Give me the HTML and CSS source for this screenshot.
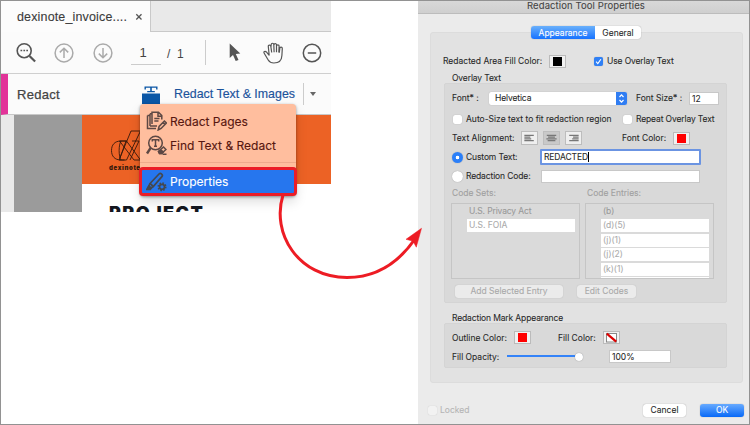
FILE: index.html
```html
<!DOCTYPE html>
<html lang="en">
<head>
<meta charset="utf-8">
<title>Redaction Tool Properties</title>
<link rel="stylesheet" href="styles.css">
</head>
<body>
<main class="frame">
  <section class="app">
    <div class="tabs"><div class="tab"><span class="tab-name">dexinote_invoice....</span><svg class="close" viewBox="0 0 8 8"><path d="M1.3 1.3l5.2 5.2M6.5 1.3L1.3 6.5"/></svg></div></div>
    <div class="toolbar">
      <svg class="tool search" viewBox="0 0 22 22"><circle cx="9.2" cy="8.700" r="7"/><path d="M14.500 14l5.600 5.500" stroke-width="2.2"/><path d="M5.500 8.500h1.700M8.400 8.500h1.700M11.300 8.500h1.700" stroke-width="1.6"/></svg>
      <svg class="tool up" viewBox="0 0 20 20"><circle cx="10" cy="10" r="8.9"/><path d="M10 15V5.5M5.8 9.4L10 5.2l4.2 4.2"/></svg>
      <svg class="tool down" viewBox="0 0 20 20"><circle cx="10" cy="10" r="8.9"/><path d="M10 5v9.5M5.8 10.6l4.2 4.2 4.2-4.2"/></svg>
      <span class="page-number">1</span>
      <span class="page-total">/&nbsp; 1</span>
      <i class="rule"></i>
      <svg class="tool cursor" viewBox="0 0 12 19"><path d="M.7.5v14.4l3.3-3 2.7 6.2 2.8-1.2-2.7-6 4.5-.3z"/></svg>
      <svg class="tool hand" viewBox="0 0 21 22"><path d="M6.2 13.5L3.4 10C2 8.5.3 9.8 1.2 11.3l4 6.7c1.2 2 3 3 5.7 3 5.2 0 7.8-3 8-7.500l.4-7c0-1.700-2.300-1.900-2.500-.2l-.5 4.500M6.200 13.500L5.300 4.500c-.2-1.800 2.200-2 2.500-.3l.9 6.300M7.900 5.500L8.200 2.500c.1-1.700 2.500-1.700 2.600 0l.3 7.700M10.900 3c0-1.900 2.600-1.900 2.600-.1v7.400M13.500 4c.1-1.700 2.700-1.600 2.600.2l-.3 6.400"/></svg>
      <svg class="tool minus" viewBox="0 0 20 20"><circle cx="10" cy="10" r="8.700"/><path d="M5.800 10h8.400"/></svg>
    </div>
    <div class="redact-bar">
      <span class="redact-title">Redact</span>
      <svg class="stamp" viewBox="0 0 18 18"><path d="M0 7.500h18V18H0zM2.500 3.500V.4h13v3.100h-1.400V1.700H9.800V5h3v1.200H5.200V5h3V1.700H3.900V3.500H2.500z"/></svg>
      <span class="redact-mode">Redact Text &amp; Images</span>
      <i class="split"></i><i class="caret"></i>
    </div>
    <div class="document">
      <div class="page">
        <div class="banner">
          <svg class="logo" viewBox="109 130 42 32"><path d="M127 141h-6c-6.500 0-9.500 4-9.500 9.500s3 9.500 9.500 9.500h3.500M121 141c-2.500 4-2.500 15 0 19M119.500 141h7l14 19h-6.500zM131 131h9.500l-14 29h-7.500zM132 141h7l-9 19M126 141l-6 17"/></svg>
          <span class="logo-name">dexinote</span>
        </div>
        <div class="heading">PROJECT</div>
      </div>
    </div>
  </section>

  <section class="dialog">
    <header class="title">Redaction Tool Properties</header>
    <div class="content">
      <div class="segments"><span class="seg active">Appearance</span><span class="seg">General</span></div>
      <div class="row fill-row"><span class="w-fill">Redacted Area Fill Color:</span><i class="swatch black"></i><svg class="check on" viewBox="0 0 9 9"><path d="M2.100 4.700l1.700 1.900 3.100-4.400"/></svg><span class="tight">Use Overlay Text</span></div>
      <div class="caption tight">Overlay Text</div>
      <div class="group overlay">
        <div class="row font-row"><span class="w-font">Font* :</span><div class="select"><span class="tight">Helvetica</span><svg viewBox="0 0 10 13"><path d="M3 5l2-2.200L7 5M3 8l2 2.200L7 8"/></svg></div><span class="w-size">Font Size* :</span><div class="field size">12</div></div>
        <div class="row auto-row"><i class="check"></i><span class="w-auto">Auto-Size text to fit redaction region</span><i class="check"></i><span class="repeat tight">Repeat Overlay Text</span></div>
        <div class="row align-row"><span class="w-align">Text Alignment:</span>
          <svg class="align" viewBox="0 0 17 14"><path d="M2.500 4h11M2.500 6h7M2.500 8h8M2.500 10h11"/></svg>
          <svg class="align pressed" viewBox="0 0 17 14"><path d="M3 4h11M4.500 6h8M2.500 8h12M4 10h9"/></svg>
          <svg class="align" viewBox="0 0 17 14"><path d="M3.500 4h11M8 6h6.500M7 8h7.500M3.500 10h11"/></svg>
          <span class="w-color">Font Color:</span><i class="swatch red"></i></div>
        <div class="row custom-row"><i class="radio chosen"></i><span class="w-radio tight">Custom Text:</span><div class="field custom"><span class="tight">REDACTED</span><i class="beam"></i></div></div>
        <div class="row code-row"><i class="radio"></i><span class="w-radio tight">Redaction Code:</span><div class="field code"></div></div>
        <div class="row lists-label"><span class="w-sets">Code Sets:</span><span>Code Entries:</span></div>
        <div class="lists">
          <div class="list"><div class="item plain tight">U.S. Privacy Act</div><div class="item">U.S. FOIA</div></div>
          <div class="list"><div class="item plain">(b)</div><div class="item">(d)(5)</div><div class="item">(j)(1)</div><div class="item">(j)(2)</div><div class="item">(k)(1)</div><div class="item"></div></div>
        </div>
        <div class="row list-buttons"><span class="button off add">Add Selected Entry</span><span class="button off edit">Edit Codes</span></div>
      </div>
      <div class="caption mark-caption tight">Redaction Mark Appearance</div>
      <div class="group mark">
        <div class="row outline-row"><span class="w-outline">Outline Color:</span><i class="swatch red"></i><span class="w-mark-fill">Fill Color:</span><svg class="swatch none" viewBox="0 0 17 13"><rect x="3.500" y="2.500" width="10" height="8.500"/><path d="M3.800 2.700l9.400 8"/></svg></div>
        <div class="row opacity-row"><span class="w-opacity">Fill Opacity:</span><div class="slider"><i></i></div><div class="field percent">100%</div></div>
      </div>
    </div>
    <footer><i class="check dim"></i><span class="locked">Locked</span><span class="button cancel">Cancel</span><span class="button ok">OK</span></footer>
  </section>

  <div class="menu">
    <div class="menu-item"><svg viewBox="0 0 21 20"><path d="M10 17.500H1.500V4.500M4 15H11M6 1.200h6.500l3.300 3.300V8.500M6 .5V13M12 1.200v4h4M1.500 4.500H4M4 2.800V15M4 2.800h2M8.300 7.500h5.200M8.300 10h4.200M12.200 19l.9-3.500 5.300-5.500 2 2-5.300 5.500zM16.800 11.500l2 2"/></svg><span>Redact Pages</span></div>
    <div class="menu-item"><svg viewBox="0 0 21 20"><circle cx="9.500" cy="8" r="6.800"/><path d="M4.900 12.500L1 18.500" stroke-width="2.400"/><path d="M6.300 6.500V4.800h6.400v1.700M9.500 5v6.300M8 11.300h3M12.500 16.500l5-4.500 2.500 2.500-4.500 4h-2zM14.500 15l2.800 2.500M16.500 19.300h4"/><path d="M12.500 16.500l2-1.800 2.800 2.300-1.800 1.500h-2z" fill="#5d4844"/></svg><span>Find Text &amp; Redact</span></div>
    <div class="menu-item selected"><svg viewBox="0 0 21 20"><path d="M4 11.500L13 2c1.700-1.600 4.400.8 2.900 2.600L7.300 14.500zM4 11.500l-1.500 3.500 2 1.300 2.800-1.800"/><path d="M.8 17.500l2-3.500 2.500 2.200-1 1.300z" fill="#44484f"/><circle cx="16" cy="14.800" r="2.500"/><circle cx="16" cy="14.800" r="3.700" stroke-dasharray="1.500 1.400"/></svg><span>Properties</span></div>
  </div>
  <svg class="arrow" viewBox="0 0 160 100"><path class="arc" d="M13 0C1 38 28 82.500 77 82.500C108 82.500 129 67 145 44"/><path class="tip" d="M151.500 33.300L136 44.300l7 1.900 3.300 6z"/></svg>
</main>
</body>
</html>
```
FILE: styles.css
```css
* { box-sizing: border-box; }
body { margin: 0; background: #fff; font-family: Inter, "Liberation Sans", sans-serif; }
i { display: block; flex: none; }
svg { display: block; flex: none; fill: none; }
span { white-space: nowrap; }
.frame { position: relative; display: flex; justify-content: space-between; width: 750px; height: 425px; overflow: hidden; border: 1px solid #929292; }

.app { width: 330px; height: 211px; overflow: hidden; background: #fbfbfb; color: #444; font-family: "Liberation Sans", sans-serif; }
.tabs { height: 31px; background: #e9e9e9; border-bottom: 1px solid #c9c9c9; }
.tab { display: flex; align-items: center; width: 150px; height: 31px; padding: 1px 0 0 16px; background: #fcfcfc; border-right: 1px solid #c9c9c9; }
.tab-name { width: 118px; font-size: 12.500px; letter-spacing: .15px; color: #3b3b3b; -webkit-text-stroke: .1px; }
.close { width: 8px; height: 8px; stroke: #555; stroke-width: 1.3; }
.toolbar { display: flex; align-items: center; height: 42px; padding-left: 14px; border-bottom: 1px solid #cfcfcf; }
.tool { stroke: #555; stroke-width: 1.6; }
.search { width: 22px; height: 22px; }
.up, .down { width: 20px; height: 20px; margin-left: 17px; stroke: #aaa; stroke-width: 1.5; }
.down { margin-left: 19px; }
.page-number { width: 30px; height: 25px; margin-left: 18px; padding-top: 5px; padding-right: 6px; border-bottom: 1px solid #ccc; font: 13px "Liberation Sans", sans-serif; text-align: center; }
.page-total { width: 37px; margin-left: 6px; padding-top: 2px; font-size: 12px; }
.rule { width: 1px; height: 25px; background: #ccc; margin-left: 1px; }
.cursor { width: 12px; height: 19px; margin-left: 23px; fill: #555; stroke: none; }
.hand { width: 21px; height: 22px; margin-left: 22px; stroke-width: 1.2; }
.minus { width: 20px; height: 20px; margin-left: 18px; stroke-width: 1.5; }
.redact-bar { display: flex; align-items: center; height: 41px; border-left: 7px solid #e23399; border-bottom: 1px solid #c8c8c8; }
.redact-title { width: 134px; padding-left: 9px; font-size: 13px; letter-spacing: .3px; -webkit-text-stroke: .25px; }
.stamp { width: 18px; height: 18px; margin-top: 1px; fill: #0b57a6; }
.redact-mode { width: 128px; margin-left: 14px; margin-top: -1px; font-size: 12.400px; color: #1c539c; -webkit-text-stroke: .15px; }
.split { width: 1px; height: 22px; margin-left: 1px; background: #ccc; }
.caret { margin-left: 6px; border: 3.500px solid transparent; border-top: 4px solid #666; border-bottom: 0; }
.document { height: 97px; padding-left: 81px; background: linear-gradient(90deg, #e9e9e9 13px, #9b9b9b 13px); }
.page { height: 97px; overflow: hidden; background: #fff; }
.banner { height: 69px; padding: 15px 0 0 27px; background: #ec6225; }
.logo { width: 42px; height: 32px; overflow: visible; stroke: #35190c; stroke-width: .900; }
.logo-name { display: block; margin-top: 2px; font: 900 6px/8px Inter, sans-serif; letter-spacing: .65px; color: #35190c; }
.heading { padding: 18px 0 0 27px; color: #14171f; font: 900 18px/22px Inter, sans-serif; letter-spacing: 1.400px; }

.dialog { width: 331px; height: 423px; background: #ebebeb; color: #292929; font-size: 8.500px; line-height: 12px; -webkit-text-stroke: .08px; }
.tight { letter-spacing: -.13px; }
.title { height: 13px; border-bottom: 1px solid #bcbcbc; background: linear-gradient(#d8d8d8, #cfcfcf); color: #444; font-size: 9.500px; line-height: 9px; letter-spacing: .1px; text-align: center; padding-left: 5px; }
.content { height: 351px; width: 313px; margin: 18px 0 0 12px; background: #e2e2e2; border: 1px solid #dcdcdc; border-radius: 3px; }
.segments { display: flex; width: 110px; height: 13px; margin: -7px 0 0 100px; border-radius: 3px; overflow: hidden; box-shadow: 0 0 1px #888; background: #fff; line-height: 14px; }
.seg { width: 46px; text-align: center; }
.seg.active { width: 64px; color: #fff; background: linear-gradient(#6ab0fb, #1672ff); }
.row { display: flex; align-items: center; white-space: nowrap; }
.row > span, .check, .radio, .field, .select, .align { flex: none; }
.fill-row { height: 14px; margin: 15px 0 0 12px; }
.w-fill { width: 106px; }
.swatch { width: 17px; height: 13px; border: 2px solid #f1f1f1; outline: 1px solid #bbb; outline-offset: -1px; border-width: 2px 4px; }
.black { background: #000; }
.red { background: #f00; }
.check { width: 9px; height: 9px; border-radius: 2px; background: #fff; box-shadow: 0 0 1px #999; }
.check.on { margin: 0 4px 0 28px; background: #2f80f6; stroke: #fff; stroke-width: 1.100; }
.caption { height: 12px; margin: 4px 0 0 21px; }
.group { width: 283px; margin-left: 13px; background: #d9d9d9; border: 1px solid #d4d4d4; border-radius: 2px; padding-left: 7px; }
.overlay { height: 220px; margin-top: -1px; padding-top: 7px; }
.font-row { height: 14px; }
.w-font { width: 37px; }
.select { display: flex; justify-content: space-between; width: 138px; height: 13px; padding-left: 6px; background: #fff; border-radius: 2px; overflow: hidden; box-shadow: 0 0 1px #999; }
.select svg { width: 11px; height: 13px; background: #307df2; stroke: #fff; stroke-width: 1.200; }
.w-size { width: 53px; margin-left: 9px; }
.field { height: 13px; background: #fff; border: 1px solid #c8c8c8; padding-left: 2px; line-height: 12px; }
.size { width: 30px; }
.auto-row { height: 14px; margin-top: 7px; padding-left: 1px; }
.w-auto { width: 157px; margin-left: 4px; }
.repeat { margin-left: 4px; }
.align-row { height: 14px; margin-top: 5px; }
.w-align { width: 69px; }
.align { width: 17px; height: 14px; margin-right: 5px; background: #efefef; border: 1px solid #bdbdbd; stroke: #777; stroke-width: 1.500; }
.align.pressed { background: #c9c9c9; }
.w-color { width: 51px; margin-left: 35px; }
.custom-row { height: 16px; margin-top: 4px; }
.radio { width: 11px; height: 11px; margin-right: 3px; border-radius: 50%; background: #fff; box-shadow: 0 0 1px #888; }
.radio.chosen { background: radial-gradient(circle, #fff 1.500px, #2b7ff8 2.100px); }
.w-radio { width: 74px; }
.field.custom { display: flex; align-items: center; width: 161px; height: 16px; border: 2px solid #6b94e2; border-radius: 1px; }
.beam { width: 1px; height: 10px; background: #000; }
.code-row { height: 14px; margin-top: 4px; }
.field.code { width: 159px; margin-left: 1px; }
.lists-label { height: 12px; margin-top: 4px; color: #a0a0a0; }
.w-sets { width: 135px; }
.lists { display: flex; gap: 5px; height: 76px; margin: 4px 0 0 -1px; color: #ababab; }
.list { width: 129px; height: 76px; overflow: hidden; border: 1px solid #c5c5c5; padding: 1px 4px 0 15px; background: #dadada; }
.item { height: 13px; padding-left: 2px; margin-bottom: 1.450px; background: #fff; line-height: 12px; }
.item.plain { background: none; color: #999; }
.list-buttons { height: 13px; margin: 6px 0 0 3px; }
.button { height: 13px; text-align: center; line-height: 13px; border-radius: 3px; background: #fff; box-shadow: 0 0 1px #888; }
.off { background: #ebebeb; color: #a9a9a9; box-shadow: 0 0 1px #aaa; }
.add { width: 108px; margin-right: 14px; }
.edit { width: 59px; }
.mark-caption { margin-top: 9px; }
.mark { height: 45px; margin-top: -1px; padding-top: 6px; }
.outline-row, .opacity-row { height: 15px; }
.w-outline { width: 62px; }
.w-mark-fill { width: 45px; margin-left: 27px; }
.swatch.none { border: 0; background: #f1f1f1; stroke: #888; stroke-width: 1; }
.none rect { fill: #fff; }
.none path { stroke: #d00; stroke-width: 2.200; }
.opacity-row { margin-top: 4px; }
.w-opacity { width: 55px; }
.slider { display: flex; align-items: center; justify-content: flex-end; width: 76px; height: 9px; background: linear-gradient(transparent 3px, #3483f8 3px, #3483f8 5px, transparent 5px); }
.slider i { width: 8px; height: 8px; border-radius: 50%; background: #fff; box-shadow: 0 0 1px #777; }
.percent { width: 62px; margin-left: 26px; }
footer { display: flex; align-items: center; height: 14px; margin: 20px 0 0 10px; }
.dim { background: #f2f2f2; box-shadow: 0 0 1px #bbb; }
.locked { width: 203px; margin-left: 3px; color: #b5b5b5; }
.cancel { width: 43px; margin-right: 14px; }
.ok { width: 44px; color: #fff; background: linear-gradient(#67aaff, #0869f7); }

.menu { position: absolute; left: 139px; top: 103px; width: 156px; height: 92px; border-radius: 4px; background: linear-gradient(transparent 58px, #eeaa8c 58px, #eeaa8c 59px, transparent 59px), #ffbe9e; box-shadow: 0 1px 3px #0006, 0 6px 12px #0002; color: #571710; font-size: 12px; padding-top: 5px; }
.menu-item { display: flex; align-items: center; height: 24px; padding-left: 6px; -webkit-text-stroke: .12px; }
.menu-item svg { width: 21px; height: 20px; margin-right: 3px; stroke: #5d4844; stroke-width: 1.500; }
.menu-item.selected { height: 29px; margin: 10px -1px 0; padding-left: 4px; border: 3px solid #eb1d27; border-radius: 4px; background: #2676ee; color: #fff; }
.menu-item.selected svg { stroke: #44484f; stroke-width: 1.700; }
.arrow { position: absolute; left: 269px; top: 194px; width: 160px; height: 100px; }
.arc { stroke: #ed1c24; stroke-width: 3; }
.tip { fill: #ed1c24; stroke: #ed1c24; stroke-width: .5; }
```
